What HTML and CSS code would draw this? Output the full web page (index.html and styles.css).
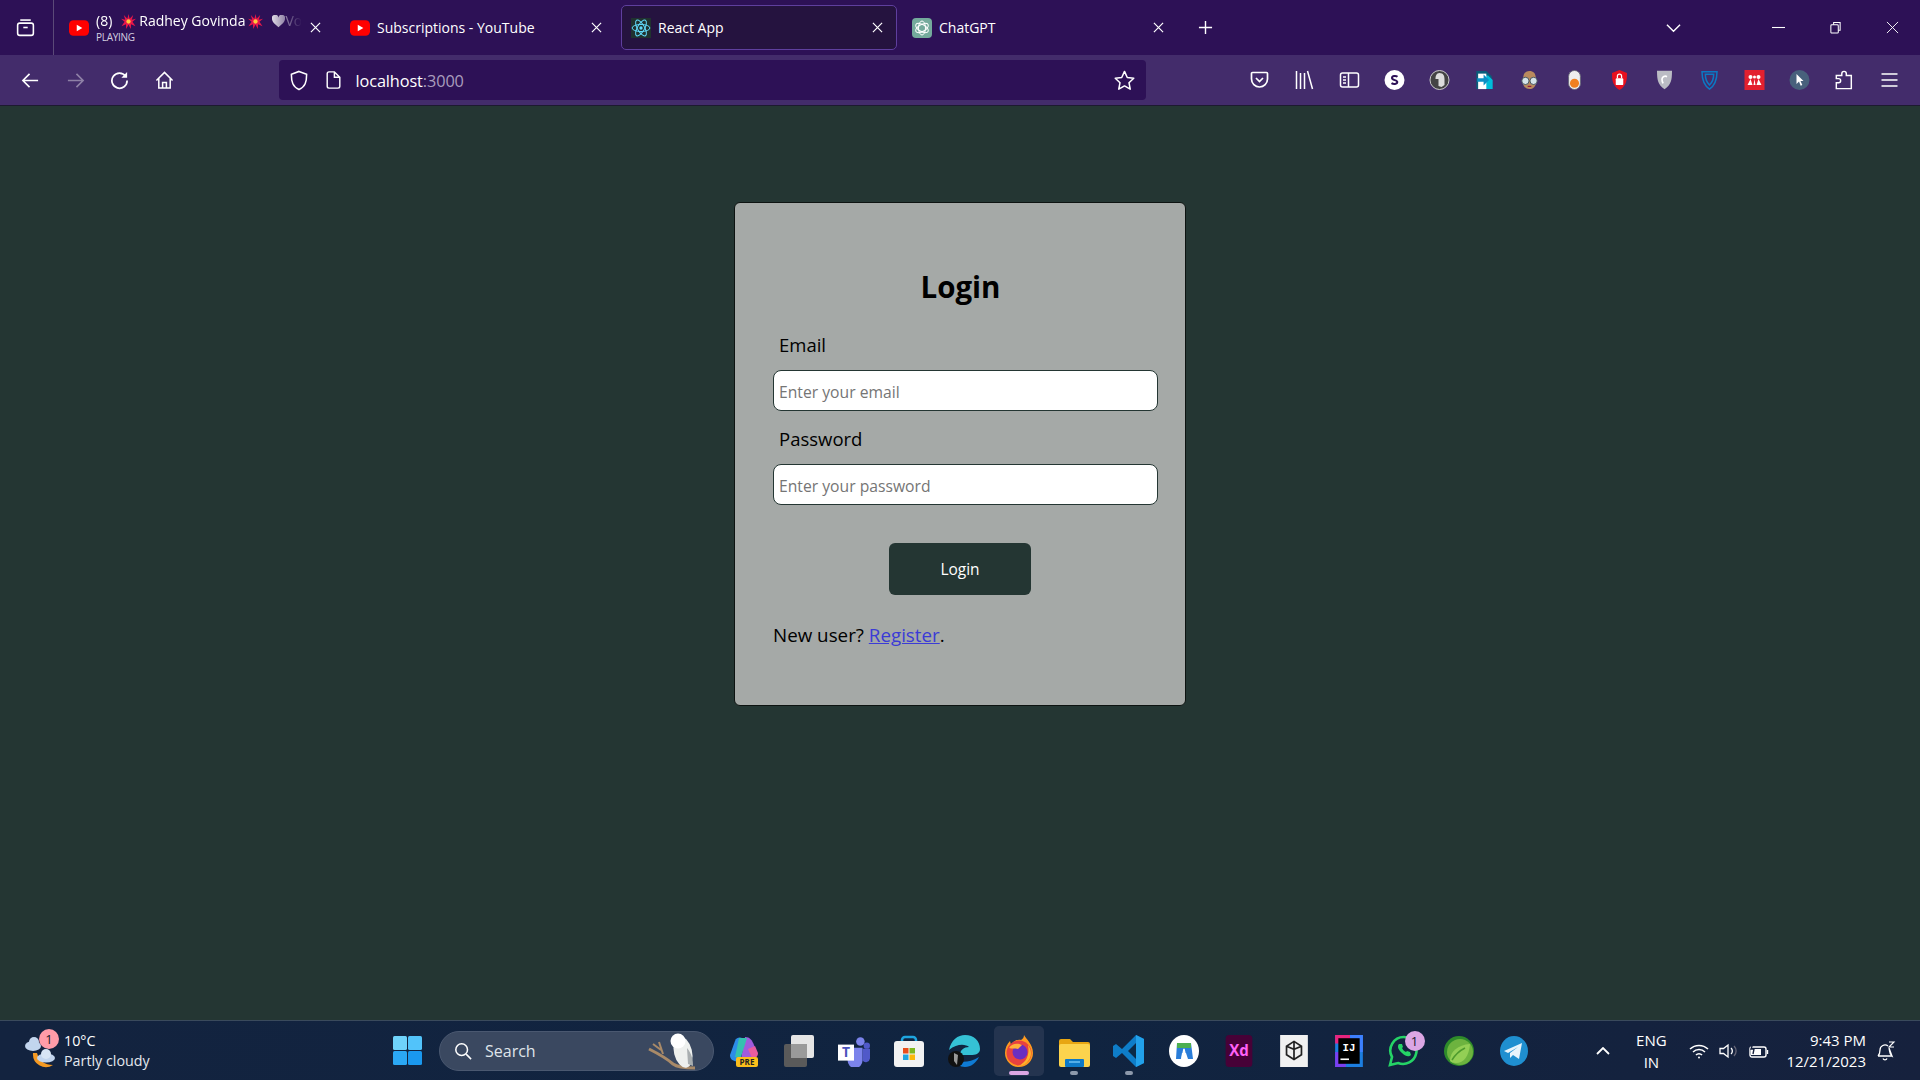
FILE: index.html
```html
<!DOCTYPE html>
<html lang="en">
<head>
<meta charset="utf-8">
<title>React App</title>
<link rel="stylesheet" href="styles.css">
</head>
<body>
<div class="browser">
  <header class="tabstrip">
    <div class="tab-manager">
      <svg class="ic24" viewBox="0 0 24 24" fill="none" stroke="#fff" stroke-width="1.8"><path d="M6 3.5h12"/><rect x="3" y="7" width="18" height="14" rx="2.5"/><path d="M9.5 12h5"/></svg>
    </div>
    <div class="tabs">
      <div class="tab">
        <svg class="fav" viewBox="0 0 18 18"><rect y="2" width="18" height="14" rx="4" fill="#f00"/><path d="M7 6l5 3-5 3z" fill="#fff"/></svg>
        <div class="tab-text two-line">
          <div class="tab-title fade"><span>(8)</span>
            <svg class="emoji first" viewBox="0 0 16 16"><path d="M8 0l1.200 5L13 1l-1.500 5L16 5l-3.800 3.200L15.500 13l-4.800-2.200L10.500 16 8 11.500 5.500 16l-.2-5.200L.5 13l3.300-4.800L0 5l4.500 1L3 1l3.800 4z" fill="#e8174a"/><circle cx="8" cy="8" r="2.300" fill="#ffc83d"/></svg><span>Radhey Govinda</span>
            <svg class="emoji" viewBox="0 0 16 16"><path d="M8 0l1.200 5L13 1l-1.500 5L16 5l-3.800 3.200L15.500 13l-4.800-2.200L10.500 16 8 11.500 5.500 16l-.2-5.200L.5 13l3.300-4.800L0 5l4.500 1L3 1l3.800 4z" fill="#e8174a"/><circle cx="8" cy="8" r="2.300" fill="#ffc83d"/></svg>
            <svg class="emoji heart" viewBox="0 0 16 16"><path d="M8 15C2 10 0 7.500 0 4.500A4 4 0 0 1 8 3a4 4 0 0 1 8 1.500C16 7.500 14 10 8 15z" fill="#fff"/></svg><span>Voi</span>
          </div>
          <div class="tab-sub">PLAYING</div>
        </div>
        <svg class="close" viewBox="0 0 12 12" stroke="#fff" stroke-width="1.300"><path d="M1 1l10 10M11 1L1 11"/></svg>
      </div>
      <div class="tab">
        <svg class="fav" viewBox="0 0 18 18"><rect y="2" width="18" height="14" rx="4" fill="#f00"/><path d="M7 6l5 3-5 3z" fill="#fff"/></svg>
        <div class="tab-text"><div class="tab-title">Subscriptions - YouTube</div></div>
        <svg class="close" viewBox="0 0 12 12" stroke="#fff" stroke-width="1.300"><path d="M1 1l10 10M11 1L1 11"/></svg>
      </div>
      <div class="tab tab-active">
        <svg class="fav" viewBox="0 0 18 18" fill="none" stroke="#61dafb" stroke-width=".9"><rect width="18" height="18" fill="#20322f" stroke="none"/><ellipse cx="9" cy="9" rx="8" ry="3.200"/><ellipse cx="9" cy="9" rx="8" ry="3.200" transform="rotate(60 9 9)"/><ellipse cx="9" cy="9" rx="8" ry="3.200" transform="rotate(120 9 9)"/><circle cx="9" cy="9" r="1.500" fill="#61dafb" stroke="none"/></svg>
        <div class="tab-text"><div class="tab-title">React App</div></div>
        <svg class="close" viewBox="0 0 12 12" stroke="#fff" stroke-width="1.300"><path d="M1 1l10 10M11 1L1 11"/></svg>
      </div>
      <div class="tab">
        <svg class="fav" viewBox="0 0 20 20" fill="none" stroke="#fff" stroke-width="1"><rect width="20" height="20" rx="4" fill="#74aa9c" stroke="none"/><ellipse cx="10" cy="10" rx="3.500" ry="7"/><ellipse cx="10" cy="10" rx="3.500" ry="7" transform="rotate(60 10 10)"/><ellipse cx="10" cy="10" rx="3.500" ry="7" transform="rotate(120 10 10)"/></svg>
        <div class="tab-text"><div class="tab-title">ChatGPT</div></div>
        <svg class="close" viewBox="0 0 12 12" stroke="#fff" stroke-width="1.300"><path d="M1 1l10 10M11 1L1 11"/></svg>
      </div>
      <svg class="new-tab" viewBox="0 0 16 16" stroke="#fff" stroke-width="1.500"><path d="M8 1v14M1 8h14"/></svg>
    </div>
    <svg class="tab-list" viewBox="0 0 16 10" fill="none" stroke="#fff" stroke-width="1.500"><path d="M1 1.500l7 7 7-7"/></svg>
    <div class="win-controls">
      <svg viewBox="0 0 12 12" stroke="#fff" stroke-width="1"><path d="M0 6h12"/></svg>
      <svg viewBox="0 0 12 14" fill="none" stroke="#fff" stroke-width="1.100"><rect x="1" y="4" width="8" height="9" rx="1"/><path d="M4 4V1.500h7V10H9"/></svg>
      <svg viewBox="0 0 14 14" stroke="#fff" stroke-width="1"><path d="M1 1l12 12M13 1L1 13"/></svg>
    </div>
  </header>

  <nav class="toolbar">
    <div class="nav-buttons">
      <svg viewBox="0 0 20 20" fill="none" stroke="#fff" stroke-width="1.700"><path d="M18 10H2M9 3l-7 7 7 7"/></svg>
      <svg class="dim" viewBox="0 0 20 20" fill="none" stroke="#fff" stroke-width="1.700"><path d="M2 10h16M11 3l7 7-7 7"/></svg>
      <svg viewBox="0 0 20 20" fill="none" stroke="#fff" stroke-width="1.800"><path d="M16.500 5.500A8 8 0 1 0 18 10"/><path d="M18 1v6h-6" fill="#fff" stroke="none"/></svg>
      <svg viewBox="0 0 20 20" fill="none" stroke="#fff" stroke-width="1.600"><path d="M1.500 10L10 1.500 18.500 10M4 8v10h12V8M8 18v-6h4v6"/></svg>
    </div>
    <div class="urlbar">
      <svg class="shield" viewBox="0 0 18 22" fill="none" stroke="#fff" stroke-width="1.600"><path d="M9 1.500l8 3c0 8-1.500 13-8 16-6.500-3-8-8-8-16z"/></svg>
      <svg class="page" viewBox="0 0 16 20" fill="none" stroke="#fff" stroke-width="1.600"><path d="M3 1h6l6 6v10a2 2 0 0 1-2 2H3a2 2 0 0 1-2-2V3a2 2 0 0 1 2-2zM9 1v6h6"/></svg>
      <div class="url">localhost<span class="port">:3000</span></div>
      <svg class="star" viewBox="0 0 22 22" fill="none" stroke="#fff" stroke-width="1.600" stroke-linejoin="round"><path d="M11 1.500l2.900 6.300 6.800.8-5 4.700 1.300 6.800-6-3.400-6 3.400 1.300-6.800-5-4.700 6.800-.8z"/></svg>
    </div>
    <div class="ext-icons">
      <svg viewBox="0 0 20 20" fill="none" stroke="#fff" stroke-width="1.700"><path d="M3 2.500h14a1 1 0 0 1 1 1V9a8 8 0 0 1-16 0V3.500a1 1 0 0 1 1-1z"/><path d="M6.500 8l3.500 3.500L13.500 8"/></svg>
      <svg viewBox="0 0 20 20" stroke="#fff" stroke-width="1.500"><path d="M2 1v18M6 3v16M10 3v16M13 1l5 18"/></svg>
      <svg viewBox="0 0 20 20" fill="none" stroke="#fff" stroke-width="1.500"><rect x="1" y="3" width="18" height="14" rx="2"/><path d="M9 3v14M3.500 7h3M3.500 10h3M3.500 13h3"/></svg>
      <svg viewBox="0 0 20 20"><circle cx="10" cy="10" r="10" fill="#fff"/><path d="M13 6.800C11.500 5.600 7.500 5.700 7.500 8c0 2.700 5.300 1.600 5.300 4.100 0 2.200-4 2.300-5.800 1" fill="none" stroke="#2d1156" stroke-width="2"/></svg>
      <svg viewBox="0 0 20 20"><circle cx="10" cy="10" r="9.500" fill="#444" stroke="#ccc"/><path d="M10 3c4 0 5 3 5 6v6l-3 2-3-1V9H6c0-3 1-6 4-6z" fill="#ddd"/></svg>
      <svg viewBox="0 0 20 22"><path d="M1 1h11l6 6v14H1z" fill="#0b5c7a"/><path d="M6 6h8l5 5v10H6z" fill="#00bcd9"/><path d="M3 4h9v17H3z" fill="#fff"/><path d="M2 9h7V5l6 6-6 6v-4H2z" fill="#0b8fc4"/></svg>
      <svg viewBox="0 0 20 22"><path d="M3 10C3 3 6 1 10 1s7 2 7 9v4c0 4-3 7-7 7s-7-3-7-7z" fill="#b98a5e"/><circle cx="5.500" cy="12" r="4" fill="#d5e4ea" stroke="#3e4b55"/><circle cx="14.500" cy="12" r="4" fill="#d5e4ea" stroke="#3e4b55"/><path d="M8 18h4" stroke="#803"/></svg>
      <svg viewBox="0 0 14 22"><rect x=".5" y=".5" width="13" height="21" rx="6.500" fill="#eee" stroke="#667"/><circle cx="7" cy="14.500" r="5" fill="#f08020"/></svg>
      <svg viewBox="0 0 20 24"><path d="M10 0l9 3.500c0 10-1 15-9 20.500C2 18.500 1 13.500 1 3.500z" fill="#e8101e"/><rect x="5.500" y="10" width="9" height="8" rx="1" fill="#fff"/><path d="M7.500 10V7.500a2.500 2.500 0 0 1 5 0V10" fill="none" stroke="#fff" stroke-width="1.500"/></svg>
      <svg viewBox="0 0 20 24"><path d="M1 1h18c0 11-1 17-9 22C2 18 1 12 1 1z" fill="#bbbcc4"/><path d="M13 8a4 4 0 0 0-6 3c0 2 .5 4 1.500 5" fill="none" stroke="#fff" stroke-width="2"/></svg>
      <svg viewBox="0 0 20 24" fill="none" stroke="#0b79c4" stroke-width="1.800"><path d="M1 2h18c0 10-2 16-9 21C3 18 1 12 1 2z"/><path d="M5 5h10c0 5-1 9-5 13C6 14 5 10 5 5z"/></svg>
      <svg viewBox="0 0 20 20"><rect width="20" height="20" fill="#e3202f"/><circle cx="6" cy="7" r="2" fill="#fff"/><circle cx="14" cy="7" r="2" fill="#fff"/><circle cx="10" cy="7" r="1.500" fill="#fff"/><path d="M3 15l3-6 2 6M12 15l2-6 3 6M9 15l1-6 1 6" fill="#fff"/></svg>
      <svg viewBox="0 0 20 20"><circle cx="10" cy="10" r="10" fill="#48617c"/><path d="M7 4l7 7h-3l1.800 4-1.600.7L9.500 11.500 7 14z" fill="#fff"/></svg>
      <svg viewBox="0 0 20 22" fill="none" stroke="#fff" stroke-width="1.600"><path d="M1 20.500V14h2.500a2 2 0 0 0 0-4.500H1V6h6V4a2.500 2.500 0 0 1 5 0v2h5.500v14.500z"/></svg>
      <svg viewBox="0 0 20 20" stroke="#fff" stroke-width="1.600"><path d="M2 4h16M2 10h16M2 16h16"/></svg>
    </div>
  </nav>

  <main class="page-content">
    <section class="login-card">
      <h2 class="login-title">Login</h2>
      <form class="login-form">
        <div class="field">
          <label class="field-label" for="email">Email</label>
          <input class="field-input" id="email" type="email" placeholder="Enter your email">
        </div>
        <div class="field">
          <label class="field-label" for="password">Password</label>
          <input class="field-input" id="password" type="password" placeholder="Enter your password">
        </div>
        <div class="submit-row"><button class="submit" type="button">Login</button></div>
      </form>
      <p class="register">New user? <a href="#">Register</a>.</p>
    </section>
  </main>

  <footer class="taskbar">
    <div class="weather">
      <div class="weather-icon">
        <svg viewBox="0 0 34 36"><path d="M8 20a13 13 0 0 0 20 12c-8 0-14-4-16-12z" fill="#f59a23"/><ellipse cx="8" cy="13" rx="8" ry="5" fill="#c2d5ee"/><ellipse cx="9" cy="9" rx="5" ry="5" fill="#c2d5ee"/><ellipse cx="21" cy="25" rx="9" ry="4.500" fill="#c2d5ee"/><ellipse cx="21" cy="21" rx="5" ry="5" fill="#d8e5f5"/></svg>
        <span class="badge badge-red">1</span>
      </div>
      <div class="weather-text"><div>10°C</div><div class="weather-sub">Partly cloudy</div></div>
    </div>
    <div class="task-center">
      <svg class="start" viewBox="0 0 29 29"><rect width="14" height="14" rx="1.500" fill="#6fd3fb"/><rect x="15" width="14" height="14" rx="1.500" fill="#52c3fa"/><rect y="15" width="14" height="14" rx="1.500" fill="#2ba8f5"/><rect x="15" y="15" width="14" height="14" rx="1.500" fill="#1a98ee"/></svg>
      <div class="search">
        <svg class="search-ic" viewBox="0 0 20 20" fill="none" stroke="#fff" stroke-width="1.700"><circle cx="8.500" cy="8.500" r="6.500"/><path d="M13.500 13.500L19 19"/></svg>
        <span class="search-text">Search</span>
        <svg class="owl" viewBox="0 0 56 40"><path d="M2 17c8 4 16 8 24 15 4 3 10 4 22 4" fill="none" stroke="#a98a68" stroke-width="3"/><path d="M12 10l4 12M6 12l8 6" stroke="#a98a68" stroke-width="2"/><ellipse cx="36" cy="20" rx="9" ry="16" transform="rotate(-14 36 20)" fill="#eef0ee"/><circle cx="31" cy="9" r="7.500" fill="#fff"/><path d="M40 16c5 6 6 12 6 18l-5-2z" fill="#a9aeb0"/></svg>
      </div>
      <div class="apps">
        <div class="app"><svg viewBox="0 0 30 32"><path d="M6 6C8 1 14 2 16 6l-6 20c-5 1-9-1-9-6z" fill="#2c8ce8"/><path d="M16 2c5 0 7 3 9 8l3 8c1 5-3 6-8 6H12z" fill="#a05cdc"/><path d="M10 3h8l-6 19H6z" fill="#35c1b0"/><path d="M26 11l3 7c0 4-3 5-6 5l-4-9z" fill="#e85ca0"/><rect x="7" y="22" width="22" height="10" rx="2" fill="#fbbf1c"/><text x="18" y="30" class="pre-text">PRE</text></svg></div>
        <div class="app"><svg viewBox="0 0 32 32"><rect x="1" y="9" width="23" height="23" rx="2" fill="#5a5a5a"/><rect x="8" y="0" width="23" height="23" rx="2" fill="#e5e5e5"/><rect x="8" y="9" width="16" height="14" fill="#9a9a9a"/></svg></div>
        <div class="app"><svg viewBox="0 0 30 30"><circle cx="21" cy="6" r="4" fill="#7b83eb"/><circle cx="27" cy="10" r="3" fill="#5059c9"/><path d="M9 12h14v12a7 7 0 0 1-14 0z" fill="#7b83eb"/><path d="M23 13h7v9a4 4 0 0 1-7 2z" fill="#5059c9"/><rect y="9" width="15" height="15" fill="#fff"/><text x="7.500" y="21" class="teams-text">T</text></svg></div>
        <div class="app"><svg viewBox="0 0 30 32"><path d="M8 8V5a3 3 0 0 1 3-3h8a3 3 0 0 1 3 3v3" fill="none" stroke="#1ea5e0" stroke-width="2.500"/><rect y="6" width="30" height="26" rx="3" fill="#f2f2f2"/><rect x="9" y="13" width="5.500" height="5.500" fill="#e84e1b"/><rect x="15.500" y="13" width="5.500" height="5.500" fill="#7eb81f"/><rect x="9" y="19.500" width="5.500" height="5.500" fill="#1ea5e0"/><rect x="15.500" y="19.500" width="5.500" height="5.500" fill="#fbb80b"/></svg></div>
        <div class="app"><svg viewBox="0 0 32 32"><path d="M1 15C3 5 10 0 17 0c9 0 15 6 15 14 0 5-5 6-9 6H12c0-5 4-8 9-8-3-3-12-4-20 3z" fill="#35c1d5"/><path d="M31 22c-3 6-8 10-14 10-5 0-9-3-11-8 3 3 14 5 25-2z" fill="#0f7bd4"/><circle cx="8" cy="24" r="8" fill="#111"/><path d="M6 18l4 2-1 10-3-4z" fill="#999"/></svg></div>
        <div class="app app-active"><svg viewBox="0 0 30 32"><path d="M20 0c2 4 9 9 9 18a14 14 0 0 1-28 0c0-5 2-9 5-12l1 4c2-4 7-6 10-5 2-1 3-3 3-5z" fill="#ff9a1f"/><circle cx="15" cy="18" r="12.500" fill="#e8423f"/><path d="M24 10c3 4 4 9 2 13-2 5-7 8-12 8 8-3 12-11 10-21z" fill="#fdb52a"/><circle cx="16" cy="17" r="7.500" fill="#6a2fc0"/><path d="M5 13c3-5 9-5 13-3l-4 4c-3-1-6 0-9-1z" fill="#ffb13b"/></svg></div>
        <div class="app app-open"><svg viewBox="0 0 32 32"><path d="M1 6a2 2 0 0 1 2-2h9l3 3h15a2 2 0 0 1 2 2v4H1z" fill="#e8a612"/><rect x="1" y="9" width="31" height="23" rx="2" fill="#fcd34d"/><rect x="7" y="24" width="19" height="8" rx="1" fill="#0d79c7"/><path d="M11 27h11" stroke="#6dc2f5" stroke-width="1.500"/></svg></div>
        <div class="app app-open"><svg viewBox="0 0 32 32"><path d="M23 0l8 4v24l-8 4L9 18l-6 5-3-2v-10l3-2 6 5z" fill="#0e7dc8"/><path d="M23 0l8 4v24l-8 4z" fill="#22a1ea"/><path d="M23 8v16l-8-8z" fill="#0b2a46"/></svg></div>
        <div class="app"><svg viewBox="0 0 30 32"><ellipse cx="15" cy="16" rx="15" ry="16" fill="#fff"/><path d="M8 8h14l2 16h-5l-2-6h-4l-1 6H7z" fill="#2a7dd9"/><path d="M8 8h14v5H8z" fill="#4caf50"/><path d="M13 24l2-10 2 10" stroke="#fff" fill="none" stroke-width="1.500"/></svg></div>
        <div class="app"><svg viewBox="0 0 30 36"><rect width="30" height="36" rx="4" fill="#470137"/><text x="15" y="24" class="xd-text">Xd</text></svg></div>
        <div class="app"><svg viewBox="0 0 26 30"><rect width="26" height="30" fill="#f1f1f1"/><path d="M13 6l7 4.500v8L13 23l-7-4.500v-8zM13 6v7.500M6 10.500l7 3 7-3M13 13.500V23" fill="none" stroke="#222" stroke-width="1.600"/></svg></div>
        <div class="app"><svg viewBox="0 0 26 30"><path d="M0 0h26v30H0z" fill="#1c7ee0"/><path d="M0 0h14v8H0z" fill="#e8247f"/><path d="M14 0h12v16H14z" fill="#3d80ff"/><path d="M0 16h10v14H0z" fill="#7a3ff0"/><rect x="3" y="3" width="20" height="24" fill="#000"/><text x="13" y="15" class="ij-text">IJ</text><rect x="5" y="22" width="8" height="1.500" fill="#fff"/></svg></div>
        <div class="app"><div class="wa-wrap"><svg viewBox="0 0 30 32"><path d="M15 2a13.500 13.500 0 0 0-12 20L1 30l8-2A13.500 13.500 0 1 0 15 2z" fill="none" stroke="#25d366" stroke-width="2.600"/><path d="M10 9c-2 2-1 6 3 9 4 4 7 4 9 2l-1-3-3-1-1 1c-2-1-3-2-4-4l1-1-1-3z" fill="#25d366"/></svg><span class="badge badge-purple">1</span></div></div>
        <div class="app"><svg viewBox="0 0 30 32"><circle cx="15" cy="16" r="15" fill="#2e8b2a"/><circle cx="16" cy="17" r="13" fill="#6db33f"/><path d="M6 26c0-10 8-16 20-17-1 12-6 19-14 19-3 0-5-1-6-2z" fill="#93cf55"/><path d="M8 25c3-5 7-9 13-12" stroke="#4d9a2d" fill="none" stroke-width="1.500"/></svg></div>
        <div class="app"><svg viewBox="0 0 30 32"><ellipse cx="15" cy="16" rx="14" ry="15" fill="#1f8fd0"/><path d="M5 16l18-8-3 16-6-4-3 3v-5l8-6-10 6z" fill="#e8f4fb"/></svg></div>
      </div>
    </div>
    <div class="tray">
      <svg class="tray-chevron" viewBox="0 0 14 8" fill="none" stroke="#fff" stroke-width="1.800"><path d="M1 7l6-6 6 6"/></svg>
      <div class="lang"><div>ENG</div><div>IN</div></div>
      <div class="tray-icons">
        <svg viewBox="0 0 20 16" fill="none" stroke="#fff" stroke-width="1.500"><path d="M1 6a13 13 0 0 1 18 0M4 9a8.500 8.500 0 0 1 12 0M7 12a4 4 0 0 1 6 0"/><circle cx="10" cy="14.500" r="1" fill="#fff" stroke="none"/></svg>
        <svg viewBox="0 0 20 16" fill="none" stroke="#fff" stroke-width="1.300"><path d="M1 5.500h3.500L9 2v12l-4.500-3.500H1z"/><path d="M12 5a4 4 0 0 1 0 6"/><path d="M15 3a7 7 0 0 1 0 10" stroke="#667"/></svg>
        <svg viewBox="0 0 20 16" fill="none" stroke="#fff" stroke-width="1.400"><rect x="1" y="4" width="16" height="10" rx="2"/><path d="M18.500 7v4"/><path d="M2 6h10v6H2z" fill="#fff" stroke="none"/><path d="M4 0L2 6h3l-1 5" stroke="#16213d"/></svg>
      </div>
      <div class="clock"><div>9:43 PM</div><div>12/21/2023</div></div>
      <svg class="bell" viewBox="0 0 20 20" fill="none" stroke="#fff" stroke-width="1.300"><path d="M2 15c2-2 2-3 2-6a5 5 0 0 1 8-4M13 7c1 3 0 6 3 8zM2 15h14M7 17.500a2.200 2.200 0 0 0 4 0"/><path d="M13 1h5l-5 5h5" stroke-width="1.100"/></svg>
    </div>
  </footer>
</div>
</body>
</html>
```
FILE: styles.css
```css
* { box-sizing: border-box; }
html, body { margin: 0; height: 100%; overflow: hidden; }
body { font-family: "Open Sans", "Noto Sans", sans-serif; background: #243633; }
svg { display: block; flex: none; }
.browser { display: flex; flex-direction: column; height: 1080px; }

/* tab strip */
.tabstrip { height: 55px; background: #2d1156; display: flex; align-items: center; color: #fff; flex: none; }
.tab-manager { width: 54px; height: 55px; border-right: 1px solid #5b4a78; display: flex; align-items: center; justify-content: center; padding-right: 3px; }
.ic24 { width: 21px; height: 21px; }
.tabs { display: flex; align-items: center; gap: 5px; margin-left: 5px; }
.tab { width: 276px; height: 45px; display: flex; align-items: center; padding: 0 13px 0 9px; border: 1px solid transparent; border-radius: 5px; font-size: 14px; }
.tab-active { background: #25133f; border-color: #5f3f9e; }
.fav { width: 20px; height: 20px; margin-right: 7px; }
.tab-text { flex: 1; min-width: 0; white-space: nowrap; }
.tab-title { line-height: 18px; padding-top: 1px; }
.two-line { align-self: flex-start; padding-top: 5px; }
.fade { display: flex; align-items: center; -webkit-mask-image: linear-gradient(to right, #000 82%, transparent 99%); mask-image: linear-gradient(to right, #000 82%, transparent 99%); }
.emoji { width: 15px; height: 15px; margin: 0 3px; }
.emoji.first { margin-left: 9px; }
.emoji.heart { margin: 0 0 0 6px; width: 13px; height: 13px; }
.tab-sub { font-size: 10px; line-height: 13px; color: #d5cfe0; letter-spacing: -.3px; padding-top: 1px; }
.close { width: 11px; height: 11px; margin-left: 6px; }
.new-tab { width: 15px; height: 15px; margin-left: 15px; }
.tab-list { width: 15px; height: 10px; margin-left: 453px; }
.win-controls { display: flex; align-items: center; gap: 44px; margin-left: 91px; }
.win-controls svg { width: 13px; height: 13px; }

/* toolbar */
.toolbar { height: 51px; background: #432c6b; display: flex; align-items: center; flex: none; border-bottom: 1px solid #1d1a30; padding-left: 21px; }
.nav-buttons { display: flex; align-items: center; gap: 25.5px; }
.nav-buttons svg { width: 19px; height: 19px; }
.dim { opacity: .4; }
.urlbar { width: 867px; height: 40px; margin-left: 105px; background: #2d1156; border-radius: 4px; display: flex; align-items: center; padding: 0 11px 0 11px; color: #fff; }
.shield { width: 18px; height: 21px; }
.page { width: 15px; height: 18px; margin-left: 18px; }
.url { flex: 1; font-size: 16.300px; line-height: 22px; padding-top: 2px; margin-left: 15px; letter-spacing: -.1px; }
.port { color: #a99dbd; }
.star { width: 21px; height: 21px; }
.ext-icons { display: flex; align-items: center; margin-left: 91px; }
.ext-icons svg { width: 45px; height: 20px; }

/* page */
.page-content { flex: 1; display: flex; justify-content: center; align-items: flex-start; padding-top: 96px; background: #243633; }
.login-card { width: 452px; height: 504px; background: #a5a9a7; border: 1px solid #0d1311; border-radius: 6px; padding: 64px 27px 0 38px; }
.login-title { margin: 0 0 24px -10px; text-align: center; font-size: 29.5px; line-height: 40px; font-weight: 700; color: #000; }
.login-form { display: flex; flex-direction: column; }
.field { display: flex; flex-direction: column; }
.field + .field { margin-top: 14px; }
.field-label { font-size: 18.500px; line-height: 28px; padding-left: 6px; color: #000; margin-bottom: 11px; }
.field-input { width: 385px; height: 41px; border: 1px solid #243633; border-radius: 8px; padding: 2px 5px 0; background: #fff; font: 15.700px "Open Sans", sans-serif; outline: none; }
.field-input::placeholder { color: #757575; opacity: 1; }
.submit-row { display: flex; justify-content: center; margin: 38px 0 0 -11px; }
.submit { width: 142px; height: 52px; background: #243633; color: #fff; border: none; border-radius: 6px; font: 15.500px "Open Sans", sans-serif; }
.register { margin: 26px 0 0; font-size: 18.800px; line-height: 28px; color: #000; }
.register a { color: #3b3bd6; }

/* taskbar */
.taskbar { height: 60px; flex: none; display: flex; align-items: center; border-top: 1px solid #3a4a5c; background: linear-gradient(90deg, #13233f, #102440 55%, #16213d); color: #fff; font-size: 14px; }
.weather { width: 390px; padding-left: 25px; display: flex; align-items: center; gap: 5px; }
.weather-icon { position: relative; width: 34px; height: 36px; }
.weather-icon svg { width: 34px; height: 36px; }
.badge { position: absolute; width: 20px; height: 20px; border-radius: 50%; display: flex; align-items: center; justify-content: center; font-size: 13px; color: #1a1a2a; }
.badge-red { background: #ff9ca8; left: 14px; top: -4px; }
.badge-purple { background: #dba6e4; right: -5px; top: -4px; }
.weather-text { line-height: 20px; font-size: 14.300px; }
.weather-sub { color: #e4e8ee; }
.task-center { display: flex; align-items: center; flex: none; }
.start { width: 29px; height: 29px; margin-left: 3px; }
.search { width: 275px; height: 40px; margin-left: 17px; border-radius: 20px; background: #3a4860; border: 1px solid #4a5870; display: flex; align-items: center; padding-left: 14px; position: relative; }
.search-ic { width: 18px; height: 18px; }
.search-text { margin-left: 13px; font-size: 16px; color: #dfe4ea; }
.owl { position: absolute; left: 207px; top: 0; width: 56px; height: 40px; }
.apps { display: flex; align-items: center; margin-left: 2px; }
.app { width: 55px; height: 50px; display: flex; align-items: center; justify-content: center; position: relative; border-radius: 5px; }
.app svg { width: 32px; height: 32px; }
.app-active { background: #24344f; width: 50px; margin: 0 2.500px; }
.app-active::after { content: ""; position: absolute; left: 15px; bottom: 1px; width: 20px; height: 4px; border-radius: 2px; background: #dba6e4; }
.app-open::after { content: ""; position: absolute; left: 24px; bottom: 1px; width: 8px; height: 4px; border-radius: 2px; background: #8d99ab; }
.wa-wrap { position: relative; width: 32px; height: 32px; }
.pre-text { font: 700 8px "Open Sans", sans-serif; fill: #222; text-anchor: middle; }
.teams-text { font: 700 13px "Open Sans", sans-serif; fill: #4b53bc; text-anchor: middle; }
.xd-text { font: 700 17px "Open Sans", sans-serif; fill: #ff61f6; text-anchor: middle; }
.ij-text { font: 700 10px "Liberation Mono", monospace; fill: #fff; text-anchor: middle; }
.tray { display: flex; align-items: center; margin-left: auto; padding-right: 24px; font-size: 15px; }
.tray-chevron { width: 14px; height: 8px; }
.lang { width: 36px; margin-left: 23px; text-align: center; line-height: 22px; }
.tray-icons { display: flex; align-items: center; gap: 10px; margin-left: 20px; }
.tray-icons svg { width: 20px; height: 16px; }
.clock { text-align: right; line-height: 21px; margin-left: 17px; }
.bell { width: 20px; height: 20px; margin-left: 10px; }
```
